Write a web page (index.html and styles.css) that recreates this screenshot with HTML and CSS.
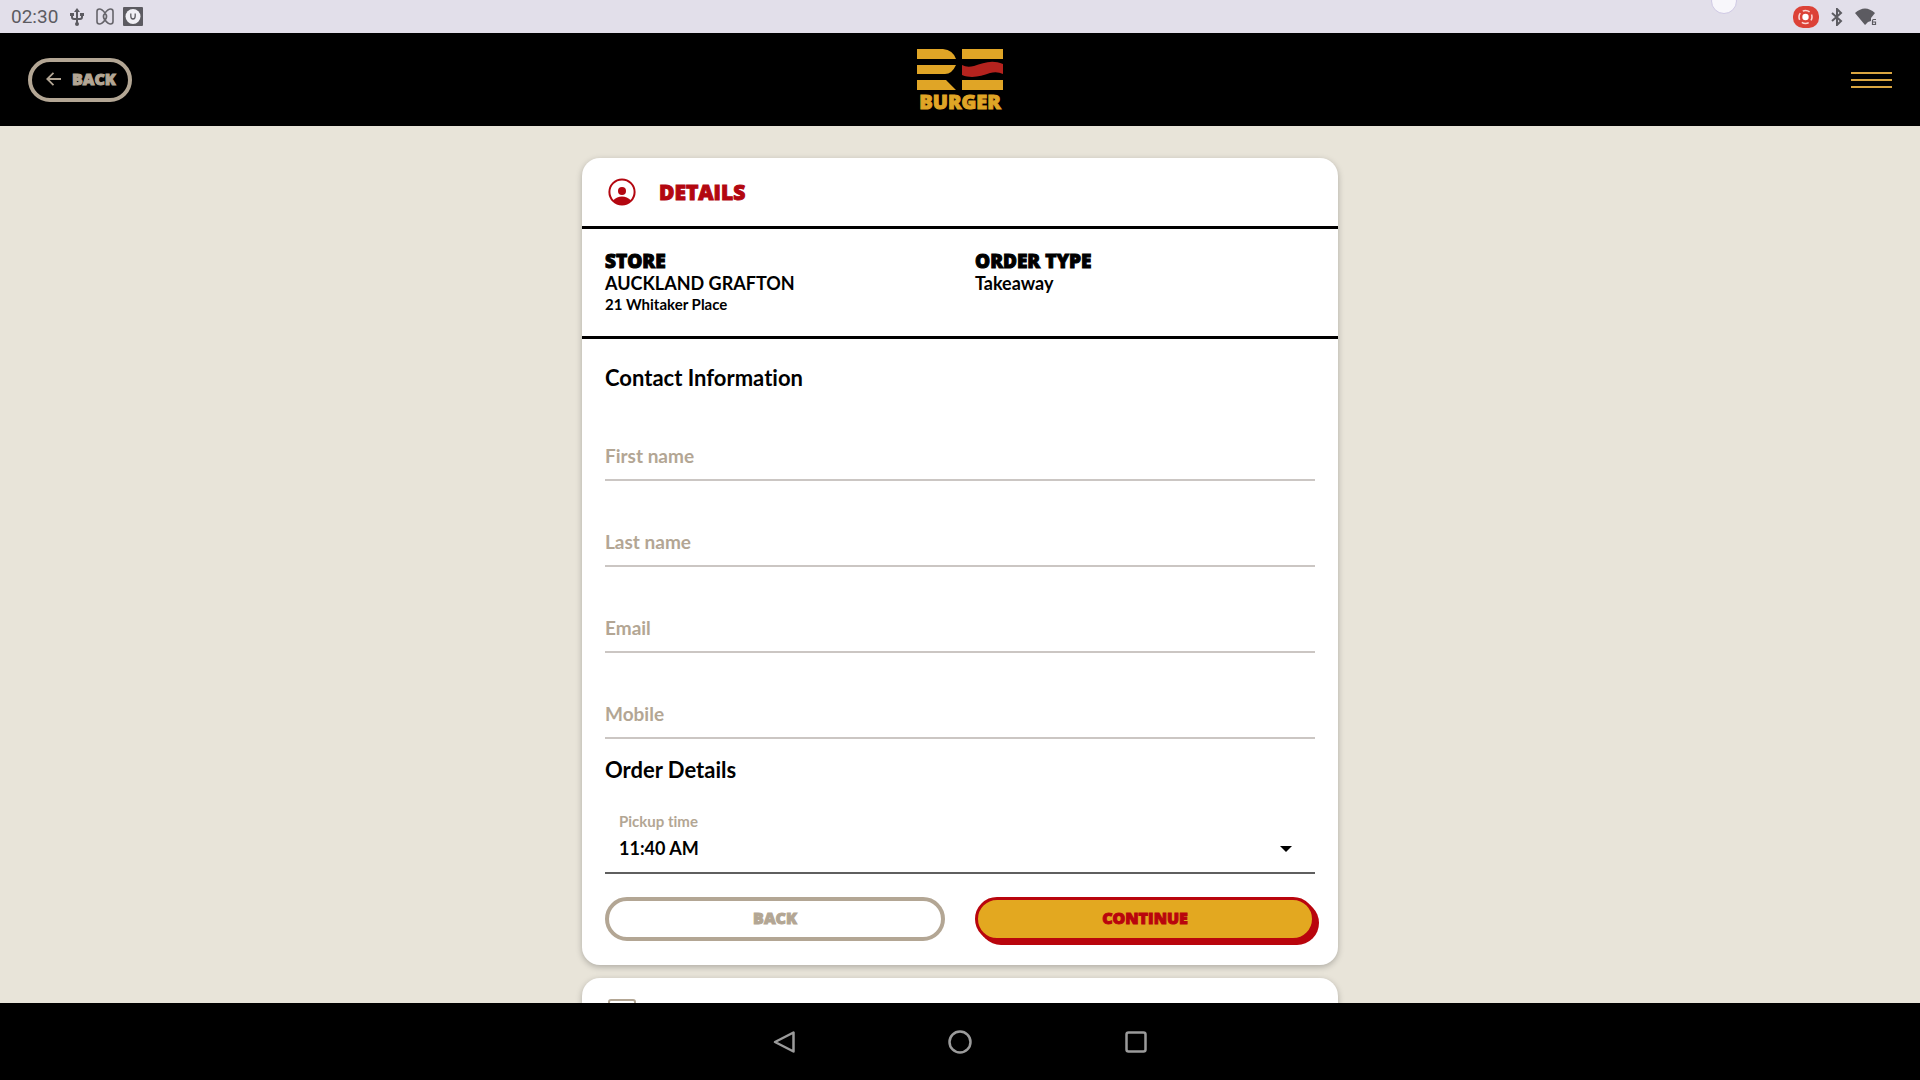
FILE: index.html
```html
<!DOCTYPE html>
<html lang="en">
<head>
	<meta charset="UTF-8">
	<title>RE Burger - Details</title>
	<link rel="stylesheet" href="styles.css">
</head>
<body>
	<!-- status bar -->
	<div class="status-bar">
		<span class="status-time">02:30</span>
		<svg class="status-usb" width="14" height="18" viewBox="0 0 14 18" fill="none" stroke="#5c5b61" stroke-width="2">
			<path d="M7 16V3M2 6v3q0 2 2 2h6q2 0 2-2V6" />
			<path d="M7 0l3 4H4zM0 5h4v3H0zM10 5h4v3h-4z" fill="#5c5b61" stroke="none" />
			<circle cx="7" cy="16" r="2" fill="#5c5b61" stroke="none" />
		</svg>
		<svg class="status-link" width="18" height="17" viewBox="0 0 18 17" fill="none" stroke="#66656b" stroke-width="1.6">
			<path d="M9 5Q6 1 3.500 1 1 1 1 3.500v10Q1 16 3.500 16 6 16 9 12q3-3.500 0-7M9 5q3-4 5.500-4Q17 1 17 3.500v10q0 2.500-2.500 2.500Q12 16 9 12 6 8.500 9 5" />
		</svg>
		<svg width="20" height="19" viewBox="0 0 20 19">
			<rect width="20" height="19" rx="1" fill="#5c5b61" />
			<circle cx="10" cy="9.500" r="7.500" fill="#f1f0f5" />
			<path d="M7.800 6.500v2.500q0 3 2.200 3t2.200-3V6.500" fill="none" stroke="#5c5b61" stroke-width="1.300" />
		</svg>
		<div class="status-right">
			<svg width="26" height="22" viewBox="0 0 26 22">
				<rect width="26" height="22" rx="10" fill="#dc4237" />
				<circle cx="12.500" cy="11" r="3.200" fill="#fff" />
				<circle cx="12.500" cy="11" r="6.500" fill="none" stroke="#fbd5d2" stroke-width="1.600" stroke-dasharray="7.200 3" stroke-dashoffset="3.600" />
			</svg>
			<svg width="12" height="18" viewBox="0 0 12 18" fill="none" stroke="#5c5b61" stroke-width="2">
				<path d="M1 5l9 8-4 4V1l4 4-9 8" />
			</svg>
			<svg width="22" height="18" viewBox="0 0 22 18">
				<path d="M0 5q10-9 20 0l-4 5v3l-3 1-3 3z" fill="#5c5b61" />
				<path d="M21 11.500h-2.500q-1 0-1 1v4h3v-2.500h-3" fill="none" stroke="#5c5b61" stroke-width="1.200" />
			</svg>
		</div>
		<span class="touch-dot"></span>
	</div>

	<!-- header -->
	<header class="header">
		<button class="btn btn-header" type="button">
			<svg width="16" height="14" viewBox="0 0 16 14" fill="none" stroke="#b3a694" stroke-width="1.800">
				<path d="M15 7H1M7.500 .8L1.200 7l6.300 6.200" />
			</svg>
			BACK
		</button>
		<a class="logo" href="#" aria-label="RE Burger">
			<svg width="88" height="76" viewBox="0 -6 88 76">
				<g fill="#e0a526">
					<path d="M1 1h26q10 1 13 10H1zM1 17h39q-4 9-11 9H1zM1 32h29l10 10H1z" />
					<path d="M46 1h41v10H46zM46 32h41v10H46z" />
				</g>
				<path d="M46 17q5 3 12 1c9-3 18-7 29-2v10q-6-3-13-1c-9 3-18 6-28 2z" fill="#b5231e" />
				<text class="logo-text" x="44" y="61" text-anchor="middle">BURGER</text>
			</svg>
		</a>
		<button class="menu-btn" type="button" aria-label="Menu">
			<span></span>
			<span></span>
			<span></span>
		</button>
	</header>

	<main class="content">
		<section class="card">
			<div class="card-title">
				<svg width="28" height="28" viewBox="0 0 28 28">
					<circle cx="14" cy="14" r="12.600" fill="none" stroke="#b30710" stroke-width="2" />
					<circle cx="14" cy="13" r="4" fill="#b30710" />
					<path d="M5 22.500q4-4 9-4t9 4q-4 4.500-9 4.500t-9-4.500z" fill="#b30710" />
				</svg>
				<h1>DETAILS</h1>
			</div>

			<div class="order-info">
				<div>
					<h2>STORE</h2>
					<p>AUCKLAND GRAFTON</p>
					<p class="address">21 Whitaker Place</p>
				</div>
				<div>
					<h2>ORDER TYPE</h2>
					<p>Takeaway</p>
				</div>
			</div>

			<form class="details-form">
				<h3>Contact Information</h3>
				<div class="field">
					<input id="firstName" type="text" placeholder=" ">
					<label for="firstName">First name</label>
				</div>
				<div class="field">
					<input id="lastName" type="text" placeholder=" ">
					<label for="lastName">Last name</label>
				</div>
				<div class="field">
					<input id="email" type="email" placeholder=" ">
					<label for="email">Email</label>
				</div>
				<div class="field">
					<input id="mobile" type="tel" placeholder=" ">
					<label for="mobile">Mobile</label>
				</div>

				<h3 class="order-heading">Order Details</h3>
				<div class="select-field">
					<select id="pickup">
						<option>11:40 AM</option>
					</select>
					<label for="pickup">Pickup time</label>
					<svg width="12" height="6" viewBox="0 0 12 6"><path d="M0 0h12L6 6z" /></svg>
				</div>

				<div class="actions">
					<button class="btn" type="button">BACK</button>
					<button class="btn btn-continue" type="submit">CONTINUE</button>
				</div>
			</form>
		</section>

		<section class="card">
			<div class="card-title">
				<svg width="28" height="28" viewBox="0 0 28 28" fill="none" stroke="#b3a694" stroke-width="2">
					<rect x="1" y="2" width="26" height="24" rx="2" />
				</svg>
			</div>
		</section>
	</main>

	<!-- system navigation -->
	<nav class="nav-bar">
		<button type="button" aria-label="Back">
			<svg width="24" height="24" viewBox="0 0 24 24"><path d="M21.500 2.500v19L3 12z" /></svg>
		</button>
		<button type="button" aria-label="Home">
			<svg width="24" height="24" viewBox="0 0 24 24"><circle cx="12" cy="12" r="10.500" /></svg>
		</button>
		<button type="button" aria-label="Recent apps">
			<svg width="24" height="24" viewBox="0 0 24 24"><rect x="2.500" y="2.500" width="19" height="19" rx="2" /></svg>
		</button>
	</nav>
</body>
</html>
```
FILE: styles.css
```css
* {
	box-sizing: border-box;
}
body {
	display: flex;
	flex-direction: column;
	height: 100vh;
	margin: 0;
	overflow: hidden;
	background: #e8e4d9;
	color: #000;
	font-family: Lato, "Open Sans", sans-serif;
	font-size: 18px;
	font-variant-ligatures: none;
	font-weight: 700;
}
h1, h2, h3, p {
	margin: 0;
}
svg {
	display: block;
	flex: none;
}
button, input, select {
	font: inherit;
}
h1, h2, .btn, .logo-text {
	font-family: "Open Sans", sans-serif;
	font-weight: 800;
	-webkit-text-stroke: 1px;
}

/* status bar */
.status-bar {
	position: relative;
	display: flex;
	flex: none;
	align-items: center;
	height: 33px;
	padding: 0 43px 0 11px;
	background: #e2dfea;
}
.status-time {
	color: #5c5b61;
	font-family: Roboto, sans-serif;
	font-size: 19px;
	font-weight: 400;
}
.status-usb {
	margin-left: 12px;
}
.status-link {
	margin: 0 9px 0 12px;
}
.status-right {
	display: flex;
	align-items: center;
	gap: 12px;
	margin-left: auto;
}
.touch-dot {
	position: absolute;
	top: -12px;
	right: 183px;
	width: 26px;
	height: 26px;
	border: 1px solid #cfc9e4;
	border-radius: 50%;
	background: #f8f7fb;
}

/* header */
.header {
	display: grid;
	flex: none;
	grid-template-columns: 1fr auto 1fr;
	align-items: center;
	height: 93px;
	padding: 0 28px;
	background: #000;
}
.logo-text {
	fill: #e0a526;
	stroke: #e0a526;
	font-size: 20px;
}
.menu-btn {
	display: flex;
	flex-direction: column;
	justify-self: end;
	gap: 5px;
	width: 41px;
	padding: 0;
	border: none;
	background: none;
	cursor: pointer;
}
.menu-btn span {
	height: 2px;
	background: #dba640;
}

/* buttons */
.btn {
	height: 44px;
	padding: 0 12px 2px;
	border: 4px solid #b3a694;
	border-radius: 22px;
	background: none;
	color: #b3a694;
	font-size: 16px;
	line-height: 20px;
	cursor: pointer;
}
.btn-header {
	display: flex;
	align-items: center;
	justify-self: start;
	gap: 10px;
	padding-left: 14px;
}
.btn-continue {
	border: 3px solid #b9050d;
	background: #e3a820;
	color: #b9050d;
	box-shadow: 2px 2px 0 #b9050d, 4px 4px 0 #b9050d;
}

/* cards */
.content {
	display: flex;
	flex: 1;
	flex-direction: column;
	align-items: center;
	gap: 13px;
	min-height: 0;
	padding-top: 32px;
	overflow: hidden;
}
.card {
	flex: none;
	width: 100%;
	max-width: 756px;
	border-radius: 18px;
	background: #fff;
	box-shadow: 0 2px 6px rgba(0, 0, 0, 0.25);
}
.card-title {
	display: flex;
	align-items: center;
	gap: 23px;
	height: 68px;
	padding: 0 26px;
}
.card-title h1 {
	color: #b30710;
	font-size: 21px;
}
.order-info {
	display: grid;
	grid-template-columns: 1fr 1fr;
	gap: 30px;
	padding: 21px 23px 22px;
	border-top: 3px solid #000;
	border-bottom: 3px solid #000;
	line-height: 22px;
}
.order-info h2 {
	font-size: 19px;
}
.order-info .address {
	font-size: 15px;
	line-height: 20px;
}

/* form */
.details-form {
	padding: 27px 23px 24px;
}
.details-form h3 {
	font-size: 22px;
	line-height: 24px;
}
.details-form .order-heading {
	margin: 19px 0 24px;
}
.field, .select-field {
	display: grid;
}
.field {
	margin-top: 38px;
}
h3 + .field {
	margin-top: 43px;
}
/* the label lies in the same cell as its control */
.field > *, .select-field > * {
	grid-area: 1 / 1;
}
.field label {
	align-self: center;
	padding-bottom: 4px;
	color: #b3a694;
	font-size: 19px;
	pointer-events: none;
}
.field input {
	width: 100%;
	height: 48px;
	padding: 0;
	border: none;
	border-bottom: 2px solid #cbc6c3;
	background: none;
	outline: none;
}
.field input:focus + label,
.field input:not(:placeholder-shown) + label {
	align-self: start;
	font-size: 15px;
	line-height: 1;
}
.select-field select {
	width: 100%;
	height: 68px;
	padding: 18px 14px 0;
	border: none;
	border-bottom: 2px solid #5f5f5f;
	background: none;
	color: #000;
	appearance: none;
	outline: none;
}
.select-field label {
	padding: 6px 14px;
	color: #b3a694;
	font-size: 15px;
	line-height: 18px;
	pointer-events: none;
}
.select-field svg {
	align-self: center;
	justify-self: end;
	margin: 18px 23px 0;
	pointer-events: none;
}
.actions {
	display: grid;
	grid-template-columns: 1fr 1fr;
	gap: 30px;
	margin-top: 23px;
}

/* system navigation */
.nav-bar {
	display: flex;
	flex: none;
	align-items: center;
	justify-content: center;
	gap: 152px;
	height: 77px;
	background: #000;
}
.nav-bar button {
	padding: 0;
	border: none;
	background: none;
}
.nav-bar svg {
	fill: none;
	stroke: #9b9b9b;
	stroke-width: 2.5;
	stroke-linejoin: round;
}
```
